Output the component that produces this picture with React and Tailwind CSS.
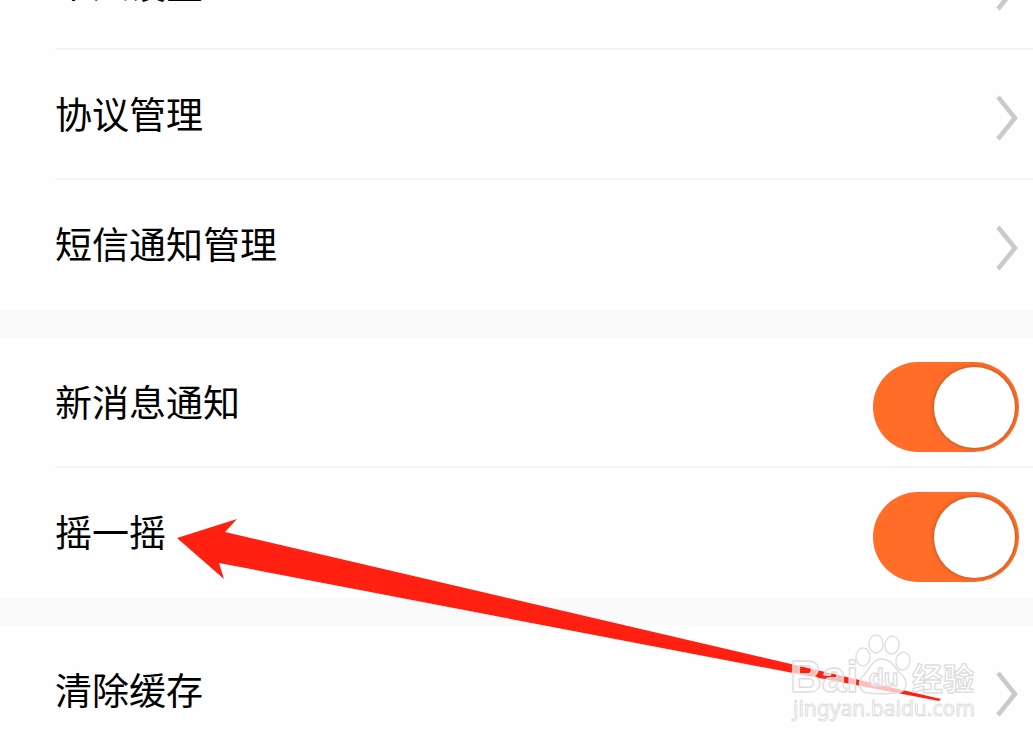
const ROW = "flex h-[130px] items-center justify-between border-b-2 pr-3.5";

function Chevron() {
  return (
    <svg className="mt-2 h-12 w-6" viewBox="0 0 24 48" fill="none" aria-hidden="true">
      <path d="M3 3L20 24L3 45" stroke="#cacaca" strokeWidth="4.5" />
    </svg>
  );
}

function LinkRow({ label, last }) {
  return (
    <li className="pl-[55px]">
      <a href="#" className={`${ROW} ${last ? "border-transparent" : "border-[#f4f4f4]"}`}>
        <span className="pt-1.5">{label}</span>
        <Chevron />
      </a>
    </li>
  );
}

function SwitchRow({ label, last }) {
  return (
    <li className="pl-[55px]">
      <label className={`${ROW} ${last ? "border-transparent" : "border-[#f4f4f4]"}`}>
        <span className="pt-1.5">{label}</span>
        <span className="mt-2.5 grid">
          <input
            type="checkbox"
            role="switch"
            defaultChecked
            className="peer col-start-1 row-start-1 h-[90px] w-[146px] appearance-none rounded-full bg-gray-200 checked:bg-[#ff6d29]"
          />
          <span className="pointer-events-none col-start-1 row-start-1 m-1 size-[81px] self-center rounded-full bg-white shadow-[0_0_4px_#a8501f] peer-checked:justify-self-end" />
        </span>
      </label>
    </li>
  );
}

function Watermark() {
  return (
    <svg
      className="pointer-events-none absolute top-[628px] right-[49px] h-[98px] w-[200px]"
      viewBox="0 0 200 98"
      fill="#ffffff"
      fillOpacity="0.7"
      stroke="#dedede"
      strokeWidth="1.4"
      strokeLinejoin="round"
      aria-hidden="true"
    >
      <text x="6" y="64" fontFamily="'Liberation Sans', Arial, sans-serif" fontWeight="700" fontSize="44">Bai</text>
      <ellipse cx="79" cy="29" rx="7" ry="9" />
      <ellipse cx="92" cy="16" rx="7" ry="9" />
      <ellipse cx="108" cy="17" rx="7" ry="9" transform="rotate(8 108 17)" />
      <ellipse cx="119" cy="33" rx="7" ry="9" transform="rotate(8 119 33)" />
      <path d="M98 31C88 31 86 41 80 47C73 53 74 65 85 65C91 66 105 66 111 65C123 65 125 54 118 47C111 41 108 31 98 31Z" />
      <text x="85" y="58" fontFamily="'Liberation Sans', Arial, sans-serif" fontWeight="700" fontSize="24">du</text>
      <text x="128" y="62" fontFamily="'Noto Sans CJK SC', sans-serif" fontWeight="700" fontSize="31">经验</text>
      <text x="9" y="88" fontFamily="'Noto Sans', sans-serif" fontSize="21" strokeWidth="1">jingyan.baidu.com</text>
    </svg>
  );
}

export default function App() {
  return (
    <main className="relative h-screen overflow-hidden bg-[#fafafa] font-['Liberation_Sans','Noto_Sans_CJK_SC',sans-serif] text-[37px] leading-[56px] text-black">
      <div className="-mt-20 flex flex-col gap-7">
        <ul className="bg-[#fefefe]">
          <LinkRow label="个人设置" />
          <LinkRow label="协议管理" />
          <LinkRow label="短信通知管理" last />
        </ul>
        <ul className="bg-[#fefefe]">
          <SwitchRow label="新消息通知" />
          <SwitchRow label="摇一摇" last />
        </ul>
        <ul className="bg-[#fefefe]">
          <LinkRow label="清除缓存" last />
        </ul>
      </div>
      <svg
        className="pointer-events-none absolute top-[510px] left-[170px] h-[200px] w-[780px]"
        viewBox="170 510 780 200"
        aria-hidden="true"
      >
        <path d="M177 538L237 519L225 532L941 699L939 701L219 563L224 579Z" fill="#ff2012" />
      </svg>
      <Watermark />
    </main>
  );
}
